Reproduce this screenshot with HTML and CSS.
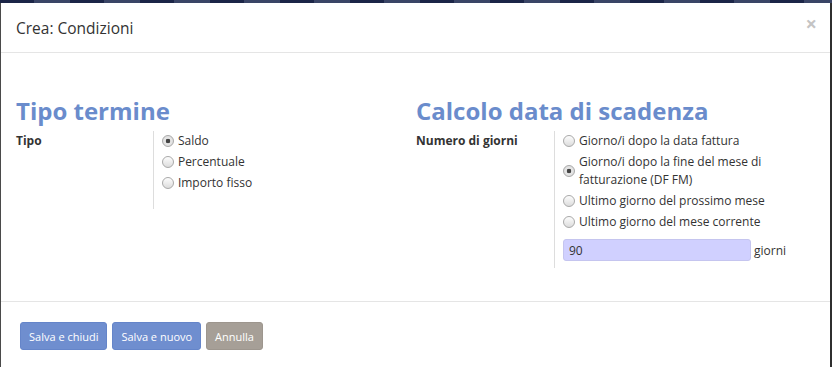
FILE: index.html
```html
<!DOCTYPE html>
<html lang="it">
<head>
    <meta charset="UTF-8">
    <meta name="viewport" content="width=device-width, initial-scale=1.0">
    <title>Crea: Condizioni</title>
    <link rel="stylesheet" href="styles.css">
</head>
<body>
    <div class="topbar"></div>

    <div class="modal">
        <div class="modal-header">
            <h4>Crea: Condizioni</h4>
            <span class="close">&times;</span>
        </div>

        <div class="modal-body">
            <div class="section">
                <h2>Tipo termine</h2>
                <div class="field">
                    <label class="field-label">Tipo</label>
                    <div class="options short">
                        <label class="option"><input type="radio" name="tipo" checked> Saldo</label>
                        <label class="option"><input type="radio" name="tipo"> Percentuale</label>
                        <label class="option"><input type="radio" name="tipo"> Importo fisso</label>
                    </div>
                </div>
            </div>

            <div class="section">
                <h2>Calcolo data di scadenza</h2>
                <div class="field">
                    <label class="field-label">Numero di giorni</label>
                    <div class="options">
                        <label class="option"><input type="radio" name="giorni"> Giorno/i dopo la data fattura</label>
                        <label class="option"><input type="radio" name="giorni" checked> <span>Giorno/i dopo la fine del mese di fatturazione (DF FM)</span></label>
                        <label class="option"><input type="radio" name="giorni"> Ultimo giorno del prossimo mese</label>
                        <label class="option"><input type="radio" name="giorni"> Ultimo giorno del mese corrente</label>
                        <div class="days">
                            <input type="text" value="90">
                            <span>giorni</span>
                        </div>
                    </div>
                </div>
            </div>
        </div>

        <div class="modal-footer">
            <button class="btn btn-primary">Salva e chiudi</button>
            <button class="btn btn-primary">Salva e nuovo</button>
            <button class="btn btn-cancel">Annulla</button>
        </div>
    </div>
</body>
</html>
```

FILE: styles.css
```css
body {
    margin: 0;
    height: 367px;
    overflow: hidden;
    background-color: #4a4a4a;
    font-family: "Open Sans", "Liberation Sans", sans-serif;
    font-size: 12px;
    color: #333;
}
.topbar {
    height: 3px;
    background: repeating-linear-gradient(90deg, #1b2547 0, #1b2547 34px, #3a4566 34px, #3a4566 70px);
}
.modal {
    margin-left: 1px;
    width: 829px;
    height: 400px;
    background-color: #fff;
    border-right: 2px solid #2f2f2f;
}
.modal-header {
    display: flex;
    justify-content: space-between;
    align-items: center;
    height: 49px;
    padding: 0 15px;
    border-bottom: 1px solid #e5e5e5;
}
.modal-header h4 {
    margin: 0;
    font-size: 15.5px;
    font-weight: 400;
    color: #333;
}
.close {
    font-size: 20px;
    font-weight: bold;
    color: #c4c4c4;
    margin-right: -2px;
    margin-top: -8px;
}
.modal-body {
    display: grid;
    grid-template-columns: 384px 1fr;
    gap: 16px;
    padding: 0 15px;
    height: 248px;
    border-bottom: 1px solid #e5e5e5;
}
.section h2 {
    margin: 41px 0 3px;
    font-size: 24px;
    line-height: 34px;
    font-weight: 700;
    color: #6a8ccc;
}
.field {
    display: flex;
}
.field-label {
    width: 138px;
    font-weight: 700;
    line-height: 18px;
    padding-top: 1px;
}
.options {
    border-left: 1px solid #ddd;
    padding: 1px 0 7px 8px;
    width: 240px;
    display: flex;
    flex-direction: column;
    gap: 3px;
}
.options.short {
    padding-bottom: 17px;
}
.option {
    display: flex;
    align-items: center;
    gap: 4px;
    line-height: 18px;
}
.option input {
    appearance: none;
    flex: none;
    width: 12px;
    height: 12px;
    margin: 0;
    border: 1px solid #a9a9a9;
    border-radius: 50%;
    background: linear-gradient(#fdfdfd, #dcdcdc);
}
.option input:checked {
    background: radial-gradient(circle, #444 0, #444 2px, #e8e8e8 2.6px, #d6d6d6 100%);
}
.days {
    display: flex;
    align-items: center;
    gap: 3px;
    margin-top: 5px;
}
.days input {
    width: 188px;
    height: 22px;
    box-sizing: border-box;
    padding: 0 5px;
    border: 1px solid #c5c5ef;
    border-radius: 3px;
    background-color: #d0d0ff;
    font-family: inherit;
    font-size: 12px;
    color: #333;
}
.modal-footer {
    display: flex;
    gap: 5px;
    padding: 20px 19px;
}
.btn {
    height: 28px;
    padding: 0 8px;
    border-radius: 3px;
    font-family: inherit;
    font-size: 11px;
    color: #fff;
    cursor: pointer;
}
.btn-primary {
    background-color: #6f8ecf;
    border: 1px solid #6585c9;
}
.btn-cancel {
    background-color: #a69f97;
    border: 1px solid #9d968e;
}
```
